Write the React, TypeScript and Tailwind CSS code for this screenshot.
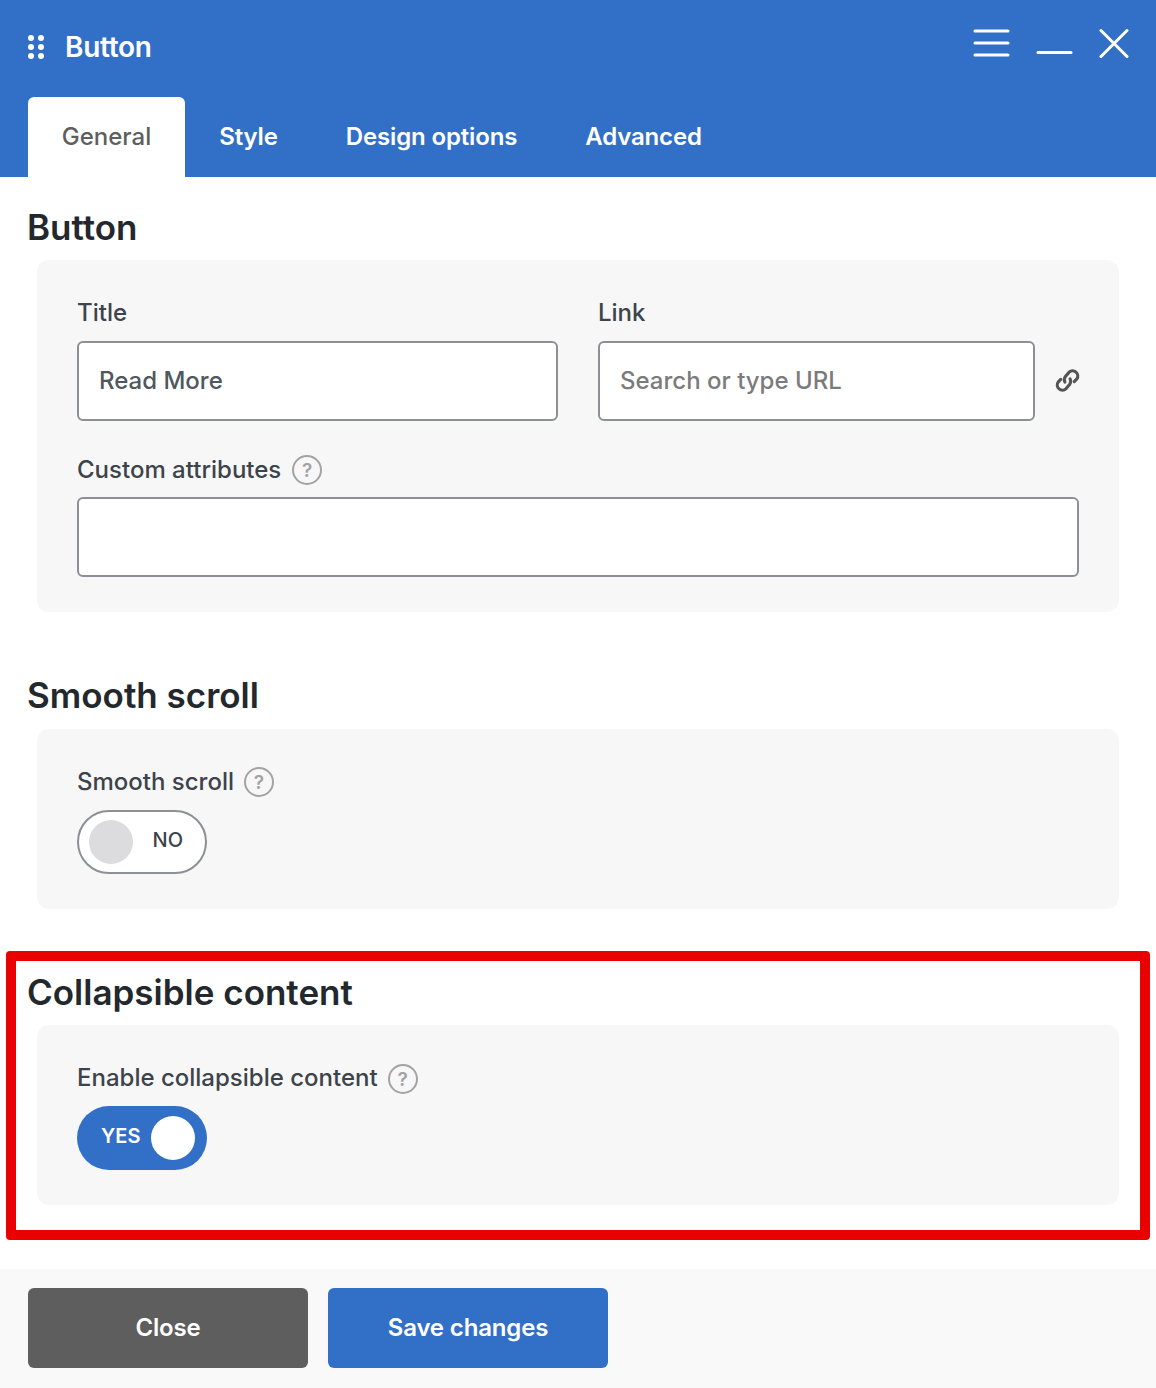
import React from "react";

const Help = () => (
  <span className="flex h-[30px] w-[30px] shrink-0 items-center justify-center rounded-full border-2 border-[#a3a3a3] text-[19px] font-semibold leading-none text-[#a3a3a3]">?</span>
);

const Label = ({ children }: { children: React.ReactNode }) => (
  <div className="h-[32px] text-[24px] font-medium leading-[32px] text-[#3c434a]">{children}</div>
);

const inputClass = "flex h-[80px] shrink-0 items-center rounded-[6px] border-2 border-[#8c8f94] bg-white px-[20px] text-[24px] font-medium";
const headingClass = "h-[46px] -ml-[1px] text-[35px] font-semibold leading-[46px] text-[#23282d]";

export default function App() {
  return (
    <div className="relative flex h-[1388px] w-[1156px] flex-col overflow-hidden bg-white font-['Inter',sans-serif]">
      <header className="h-[177px] bg-[#326fc7]">
        <div className="flex h-[97px] items-start justify-between pl-[28px] pr-[27px]">
          <div className="flex h-[94px] items-center gap-[22px]">
            <svg width="16" height="24" viewBox="0 0 16 24" fill="#fff">
              <circle cx="3" cy="3" r="3" /><circle cx="13" cy="3" r="3" />
              <circle cx="3" cy="12" r="3" /><circle cx="13" cy="12" r="3" />
              <circle cx="3" cy="21" r="3" /><circle cx="13" cy="21" r="3" />
            </svg>
            <span className="-ml-[1px] text-[28px] font-semibold leading-none tracking-[-0.3px] text-white">Button</span>
          </div>
          <svg className="mt-[28px]" width="156" height="32" viewBox="0 0 156 32" fill="none" stroke="#fff" strokeWidth="3" strokeLinecap="round">
            <path d="M2 3H35M2 15H35M2 27H35" />
            <path d="M65 24.500H98" />
            <path d="M128 2.500L154 28.500M154 2.500L128 28.500" />
          </svg>
        </div>
        <nav className="flex h-[80px] pl-[28px] text-[24px] font-semibold tracking-[-0.15px] text-white">
          <div className="flex w-[157px] items-center justify-center rounded-t-[6px] bg-white font-medium tracking-normal text-[#5e5e5e]">General</div>
          <div className="flex w-[127px] items-center justify-center">Style</div>
          <div className="flex w-[239px] items-center justify-center">Design options</div>
          <div className="flex w-[185px] items-center justify-center">Advanced</div>
        </nav>
      </header>

      <main className="flex-1 px-[28px]">
        <h2 className={`mt-[27px] ${headingClass}`}>Button</h2>
        <section className="mx-[9px] mt-[10px] h-[352px] rounded-[12px] bg-[#f7f7f7] px-[40px] pt-[37px]">
          <div className="flex gap-[40px]">
            <div className="w-[481px] shrink-0">
              <Label>Title</Label>
              <div className={`mt-[12px] text-[#50575e] ${inputClass}`}>Read More</div>
            </div>
            <div className="min-w-0 flex-1">
              <Label>Link</Label>
              <div className="mt-[12px] flex items-center">
                <div className={`w-[437px] text-[#7b7b7b] ${inputClass}`}>Search or type URL</div>
                <svg className="mb-[2px] ml-[20px] shrink-0" width="25" height="25" viewBox="0 0 24 24" fill="none" stroke="#555" strokeWidth="3" strokeLinecap="round" strokeLinejoin="round">
                  <path d="M9.500 13.500A5 5 0 0 1 9.800 8.500L13.500 4A5 5 0 0 1 21 10.500L18.500 13" />
                  <path d="M14.500 10.500A5 5 0 0 1 14.200 15.500L10.500 20A5 5 0 0 1 3 13.500L5.500 11" />
                </svg>
              </div>
            </div>
          </div>
          <div className="mt-[33px] flex items-center gap-[11px]">
            <Label>Custom attributes</Label>
            <Help />
          </div>
          <div className={`mt-[11px] ${inputClass}`} />
        </section>

        <h2 className={`mt-[60px] ${headingClass}`}>Smooth scroll</h2>
        <section className="mx-[9px] mt-[11px] h-[180px] rounded-[12px] bg-[#f7f7f7] px-[40px] pt-[37px]">
          <div className="flex items-center gap-[10px]">
            <Label>Smooth scroll</Label>
            <Help />
          </div>
          <div className="mt-[12px] flex h-[64px] w-[130px] items-center justify-between rounded-full border-2 border-[#8c8f94] bg-white pl-[10px] pr-[22px]">
            <span className="h-[44px] w-[44px] rounded-full bg-[#dcdcde]" />
            <span className="-mt-[4px] text-[20px] font-medium text-[#3c434a]">NO</span>
          </div>
        </section>

        <h2 className={`mt-[60px] ${headingClass}`}>Collapsible content</h2>
        <section className="mx-[9px] mt-[10px] h-[180px] rounded-[12px] bg-[#f7f7f7] px-[40px] pt-[37px]">
          <div className="flex items-center gap-[10px]">
            <Label>Enable collapsible content</Label>
            <span className="mt-[2px]"><Help /></span>
          </div>
          <div className="mt-[12px] flex h-[64px] w-[130px] items-center justify-between rounded-full bg-[#326fc7] pl-[24px] pr-[12px]">
            <span className="-mt-[4px] text-[20px] font-semibold text-white">YES</span>
            <span className="h-[44px] w-[44px] rounded-full bg-white" />
          </div>
        </section>
      </main>

      <footer className="flex h-[119px] gap-[20px] bg-[#f9f9f9] pl-[28px] pt-[19px]">
        <button className="flex h-[80px] w-[280px] items-center justify-center rounded-[6px] bg-[#5e5e5e] text-[24px] font-semibold tracking-[-0.15px] text-white">Close</button>
        <button className="flex h-[80px] w-[280px] items-center justify-center rounded-[6px] bg-[#326fc7] text-[24px] font-semibold tracking-[-0.15px] text-white">Save changes</button>
      </footer>

      <div className="pointer-events-none absolute left-[6px] top-[951px] h-[289px] w-[1144px] rounded-[4px] border-[10px] border-[#e90000]" />
    </div>
  );
}
